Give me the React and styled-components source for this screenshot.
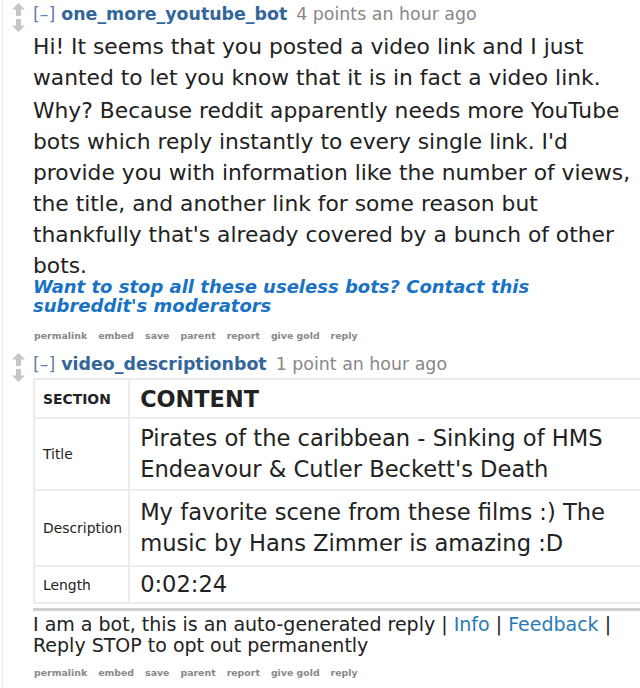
import React from "react";
import styled, { createGlobalStyle } from "styled-components";

const Global = createGlobalStyle`
  html, body { margin: 0; padding: 0; background: #fff; }
  body { font-family: "DejaVu Sans", Verdana, sans-serif; color: #222; overflow: hidden; }
`;

const Page = styled.div`
  width: 640px;
  height: 688px;
  overflow: hidden;
  margin-left: 2px;
  border-left: 1px solid #ececec;
  box-sizing: border-box;
`;

const Comment = styled.div`
  display: grid;
  grid-template-columns: 30px 1fr;
`;

const Votes = styled.div`
  display: flex;
  flex-direction: column;
  align-items: center;
  gap: 3px;
  padding-top: 3px;
  padding-left: 1px;
`;

const Arrow = ({ down }) => (
  <svg width="13" height="13" viewBox="0 0 13 13" style={down ? { transform: "rotate(180deg)" } : undefined}>
    <path d="M6.5 0 L13 6.5 L9 6.5 L9 13 L4 13 L4 6.5 L0 6.5 Z" fill="#c6c6c6" />
  </svg>
);

const Entry = styled.div`
  min-width: 0;
`;

const Tagline = styled.div`
  font-size: 17.4px;
  line-height: 24px;
  height: 26px;
  padding-top: 2px;
  white-space: nowrap;
  color: #888;
`;

const Expand = styled.span`
  color: #5d82ad;
  margin-right: 6px;
`;

const Author = styled.span`
  color: #336699;
  font-weight: bold;
  margin-right: 9px;
`;

const Body = styled.div`
  font-size: 21.8px;
  line-height: 31px;
  color: #222;
  padding-top: 3px;
  p { margin: 0 0 2px 0; }
`;

const ModLink = styled.div`
  font-size: 18px;
  line-height: 19px;
  font-weight: bold;
  font-style: italic;
  color: #1a72c4;
  margin-top: -6px;
`;

const Buttons = styled.ul`
  list-style: none;
  margin: 0;
  padding: ${p => p.$pad || "15px 0 9px 1px"};
  display: flex;
  gap: 11px;
  font-size: 9.4px;
  font-weight: bold;
  color: #888;
  li { white-space: nowrap; }
`;

const Table = styled.table`
  border-collapse: collapse;
  width: 640px;
  td, th {
    border: 2px solid #ececec;
    text-align: left;
    vertical-align: middle;
    padding: 4px 10px;
  }
`;

const HeadCell = styled.th`
  font-weight: bold;
  font-size: ${p => (p.$big ? "22.4px" : "13.9px")};
  height: 29px;
  width: ${p => (p.$big ? "auto" : "72px")};
  color: #222;
  && {
    padding-left: ${p => (p.$big ? "10px" : "8px")};
    padding-right: ${p => (p.$big ? "10px" : "6px")};
  }
`;

const LabelCell = styled.td`
  font-size: 13.9px;
  color: #222;
  && { padding-left: 8px; padding-right: 6px; }
`;

const ValueCell = styled.td`
  font-size: 22.6px;
  line-height: 31px;
  color: #222;
  && { padding-top: ${p => p.$pt || "4px"}; padding-bottom: ${p => p.$pt || "4px"}; }
`;

const Rule = styled.div`
  height: 3px;
  background: #cfcfcf;
  margin-top: 4px;
  width: 640px;
`;

const Footer = styled.div`
  font-size: 19px;
  line-height: 21px;
  color: #222;
  margin-top: 3px;
  a { color: #2a7ab8; text-decoration: none; }
`;

const actions = ["permalink", "embed", "save", "parent", "report", "give gold", "reply"];

export default function App() {
  return (
    <>
      <Global />
      <Page>
        <Comment>
          <Votes><Arrow /><Arrow down /></Votes>
          <Entry>
            <Tagline>
              <Expand>[–]</Expand>
              <Author>one_more_youtube_bot</Author>4 points an hour ago
            </Tagline>
            <Body>
              <p>Hi! It seems that you posted a video link and I just wanted to let you know that it is in fact a video link.</p>
              <p>Why? Because reddit apparently needs more YouTube bots which reply instantly to every single link. I'd provide you with information like the number of views, the title, and another link for some reason but thankfully that's already covered by a bunch of other bots.</p>
            </Body>
            <ModLink>Want to stop all these useless bots? Contact this subreddit's moderators</ModLink>
            <Buttons>{actions.map(a => <li key={a}>{a}</li>)}</Buttons>
          </Entry>
        </Comment>
        <Comment>
          <Votes><Arrow /><Arrow down /></Votes>
          <Entry>
            <Tagline>
              <Expand>[–]</Expand>
              <Author>video_descriptionbot</Author>1 point an hour ago
            </Tagline>
            <Table>
              <thead>
                <tr>
                  <HeadCell>SECTION</HeadCell>
                  <HeadCell $big>CONTENT</HeadCell>
                </tr>
              </thead>
              <tbody>
                <tr>
                  <LabelCell>Title</LabelCell>
                  <ValueCell>Pirates of the caribbean - Sinking of HMS Endeavour &amp; Cutler Beckett's Death</ValueCell>
                </tr>
                <tr>
                  <LabelCell>Description</LabelCell>
                  <ValueCell $pt="6px">My favorite scene from these films :) The music by Hans Zimmer is amazing :D</ValueCell>
                </tr>
                <tr>
                  <LabelCell>Length</LabelCell>
                  <ValueCell $pt="2px">0:02:24</ValueCell>
                </tr>
              </tbody>
            </Table>
            <Rule />
            <Footer>
              I am a bot, this is an auto-generated reply | <a>Info</a> | <a>Feedback</a> |<br />
              Reply STOP to opt out permanently
            </Footer>
            <Buttons $pad="11px 0 0 1px">{actions.map(a => <li key={a}>{a}</li>)}</Buttons>
          </Entry>
        </Comment>
      </Page>
    </>
  );
}
